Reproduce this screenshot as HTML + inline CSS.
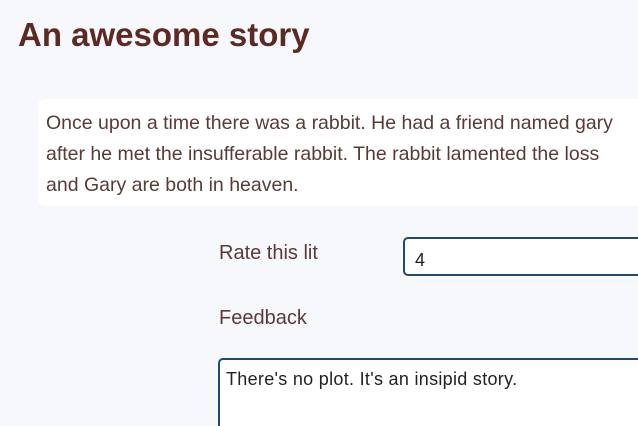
<!DOCTYPE html>
<html style="overflow:hidden;height:426px"><head><style>
body{margin:0;background:#f7f8fc;width:638px;height:426px;overflow:hidden;position:relative;font-family:"Liberation Sans",sans-serif;color:#5a3a36}
h1{position:absolute;left:18px;top:16px;margin:0;font-size:33px;font-weight:bold;color:#5c2a22;letter-spacing:0}
.box{position:absolute;left:38px;top:99px;width:640px;height:107px;background:#fff;border-radius:7px}
.box p{position:absolute;left:8px;top:9px;margin:0;font-size:19.5px;line-height:31px;white-space:nowrap}
.lbl{position:absolute;left:219px;font-size:20px}
.in{position:absolute;left:403px;top:237px;width:260px;height:39px;border:2px solid #1e4d6b;border-radius:5px;background:#fff;box-sizing:border-box}
.in span{position:absolute;left:10px;top:11px;font-size:18px;color:#222}
.ta{position:absolute;left:218px;top:358px;width:460px;height:68px;border:2px solid #1e4d6b;border-bottom:none;border-radius:5px 5px 0 0;background:#fff;box-sizing:border-box}
.ta span{position:absolute;left:6px;top:9px;font-size:18px;color:#222;letter-spacing:0.3px}
</style></head><body>
<h1>An awesome story</h1>
<div class="box"><p>Once upon a time there was a rabbit. He had a friend named gary<br>after he met the insufferable rabbit. The rabbit lamented the loss<br>and Gary are both in heaven.</p></div>
<div class="lbl" style="top:242px">Rate this lit</div>
<div class="in"><span>4</span></div>
<div class="lbl" style="top:307px">Feedback</div>
<div class="ta"><span>There's no plot. It's an insipid story.</span></div>
</body></html>
